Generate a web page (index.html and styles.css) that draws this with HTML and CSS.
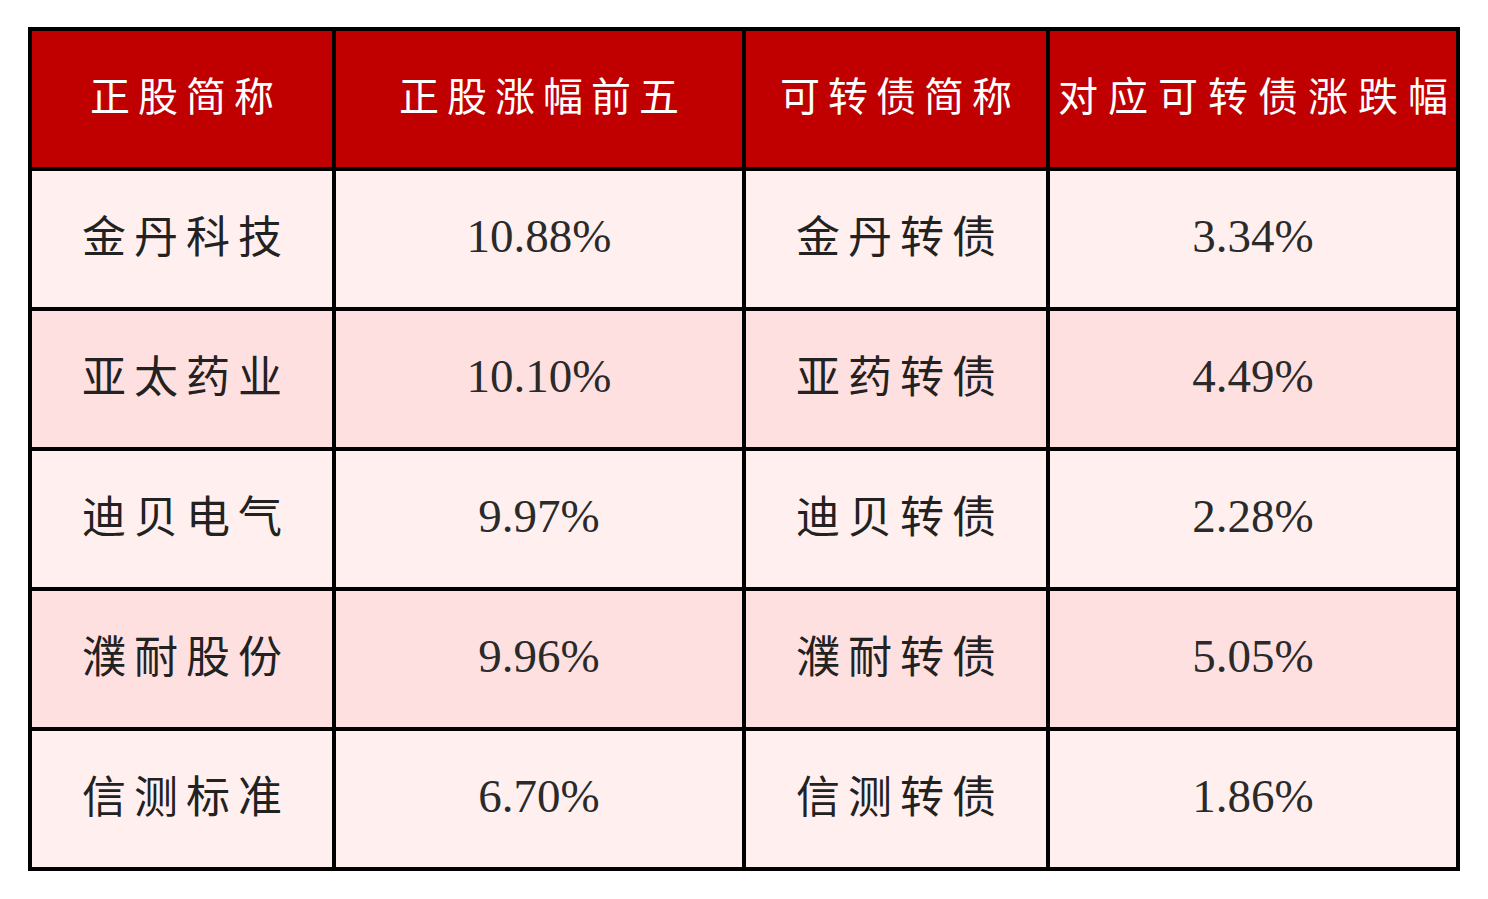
FILE: index.html
```html
<!DOCTYPE html>
<html lang="zh">
<head>
<meta charset="utf-8">
<title>正股涨幅前五</title>
<link rel="stylesheet" href="styles.css">
</head>
<body>
<div class="table">
  <div class="cell head"><span class="cjk">正股简称</span></div>
  <div class="cell head"><span class="cjk">正股涨幅前五</span></div>
  <div class="cell head"><span class="cjk">可转债简称</span></div>
  <div class="cell head"><span class="cjk wide">对应可转债涨跌幅</span></div>

  <div class="cell odd"><span class="cjk">金丹科技</span></div>
  <div class="cell odd num">10.88%</div>
  <div class="cell odd"><span class="cjk">金丹转债</span></div>
  <div class="cell odd num">3.34%</div>

  <div class="cell even"><span class="cjk">亚太药业</span></div>
  <div class="cell even num">10.10%</div>
  <div class="cell even"><span class="cjk">亚药转债</span></div>
  <div class="cell even num">4.49%</div>

  <div class="cell odd"><span class="cjk">迪贝电气</span></div>
  <div class="cell odd num">9.97%</div>
  <div class="cell odd"><span class="cjk">迪贝转债</span></div>
  <div class="cell odd num">2.28%</div>

  <div class="cell even"><span class="cjk">濮耐股份</span></div>
  <div class="cell even num">9.96%</div>
  <div class="cell even"><span class="cjk">濮耐转债</span></div>
  <div class="cell even num">5.05%</div>

  <div class="cell odd"><span class="cjk">信测标准</span></div>
  <div class="cell odd num">6.70%</div>
  <div class="cell odd"><span class="cjk">信测转债</span></div>
  <div class="cell odd num">1.86%</div>
</div>
</body>
</html>
```
FILE: styles.css
```css
html, body {
  margin: 0;
  padding: 0;
  background: #ffffff;
}
body {
  padding: 27px 0 0 28px;
}
.table {
  display: grid;
  grid-template-columns: 300px 406px 300px 406px;
  grid-template-rows: repeat(6, 136px);
  gap: 4px;
  padding: 4px;
  background: #000000;
  width: max-content;
}
.cell {
  display: flex;
  align-items: center;
  justify-content: center;
  box-sizing: border-box;
  padding-bottom: 10px;
  color: #222222;
  font-family: "Noto Sans CJK SC", "Noto Sans", sans-serif;
  font-size: 44px;
  line-height: 1;
}
.cjk {
  letter-spacing: 8px;
  margin-right: -8px;
}
.head {
  background: #c00000;
  color: #ffffff;
  font-size: 40px;
}
.head .wide {
  letter-spacing: 10px;
  margin-right: -10px;
}
.odd {
  background: #fff0ef;
}
.even {
  background: #ffe0e1;
}
.num {
  padding-bottom: 6px;
  font-family: "Liberation Serif", "Times New Roman", serif;
  font-size: 47px;
  color: #2a2a2a;
}
```
